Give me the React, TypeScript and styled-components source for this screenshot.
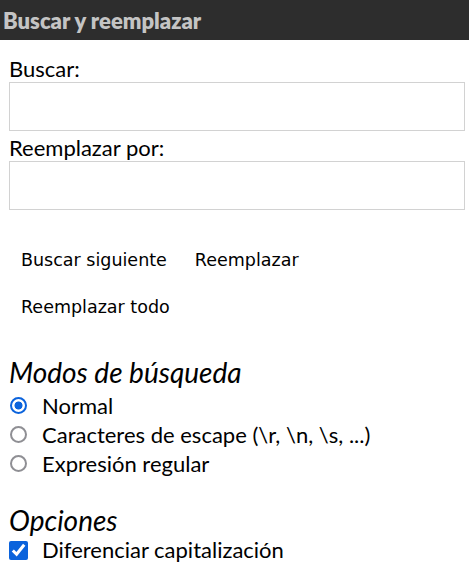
import React from "react";
import styled, { createGlobalStyle } from "styled-components";

const GlobalStyle = createGlobalStyle`
  html, body {
    margin: 0;
    padding: 0;
    background: #ffffff;
  }
  body {
    font-family: Lato, "Noto Sans", sans-serif;
    color: #000000;
  }
`;

type Mode = "normal" | "escape" | "regex";

const modes: { id: Mode; label: string }[] = [
  { id: "normal", label: "Normal" },
  { id: "escape", label: "Caracteres de escape (\\r, \\n, \\s, ...)" },
  { id: "regex", label: "Expresión regular" },
];

const App = () => {
  const [find, setFind] = React.useState("");
  const [replace, setReplace] = React.useState("");
  const [mode, setMode] = React.useState<Mode>("normal");
  const [matchCase, setMatchCase] = React.useState(true);

  return (
    <>
      <GlobalStyle />
      <Dialog>
        <TitleBar>Buscar y reemplazar</TitleBar>
        <Body>
          <Field>
            <FieldLabel htmlFor="find">Buscar:</FieldLabel>
            <TextBox id="find" value={find} onChange={(e) => setFind(e.target.value)} />
          </Field>
          <Field>
            <FieldLabel htmlFor="replace">Reemplazar por:</FieldLabel>
            <TextBox id="replace" value={replace} onChange={(e) => setReplace(e.target.value)} />
          </Field>

          <Actions>
            <ActionRow>
              <ActionButton>Buscar siguiente</ActionButton>
              <ActionButton>Reemplazar</ActionButton>
            </ActionRow>
            <ActionRow>
              <ActionButton>Reemplazar todo</ActionButton>
            </ActionRow>
          </Actions>

          <Section>
            <SectionTitle>Modos de búsqueda</SectionTitle>
            <ChoiceList>
              {modes.map((m) => (
                <Choice key={m.id} $height={29}>
                  <Radio
                    type="radio"
                    name="mode"
                    checked={mode === m.id}
                    onChange={() => setMode(m.id)}
                  />
                  {m.label}
                </Choice>
              ))}
            </ChoiceList>
          </Section>

          <Section>
            <SectionTitle>Opciones</SectionTitle>
            <Choice $height={26}>
              <Check
                type="checkbox"
                checked={matchCase}
                onChange={(e) => setMatchCase(e.target.checked)}
              />
              Diferenciar capitalización
            </Choice>
          </Section>
        </Body>
      </Dialog>
    </>
  );
};

export default App;

const Dialog = styled.div`
  width: 469px;
  display: flex;
  flex-direction: column;
`;

const TitleBar = styled.div`
  height: 40px;
  display: flex;
  align-items: center;
  padding-left: 3px;
  background: #2d2d2d;
  color: #c4c4c4;
  font-family: Lato, sans-serif;
  font-weight: 800;
  font-size: 22px;
`;

const Body = styled.div`
  display: flex;
  flex-direction: column;
  padding: 15px 4px 0 9px;
`;

const Field = styled.div`
  display: flex;
  flex-direction: column;
  & + & {
    margin-top: 3px;
  }
`;

const FieldLabel = styled.label`
  font-size: 22px;
  line-height: 27px;
`;

const TextBox = styled.input`
  box-sizing: border-box;
  width: 456px;
  height: 49px;
  margin: 0;
  border: 1px solid #d2d2d2;
  background: #ffffff;
  font-size: 18px;
  outline: none;
`;

const Actions = styled.div`
  display: flex;
  flex-direction: column;
  margin-top: 26px;
`;

const ActionRow = styled.div`
  display: flex;
  gap: 4px;
`;

const ActionButton = styled.button`
  border: none;
  background: none;
  padding: 0 12px;
  height: 47px;
  font-family: "DejaVu Sans", Verdana, sans-serif;
  font-size: 17.5px;
  color: #000000;
  cursor: pointer;
`;

const Section = styled.div`
  display: flex;
  flex-direction: column;
  margin-top: 25px;
`;

const SectionTitle = styled.div`
  font-style: italic;
  font-size: 28px;
  line-height: 34px;
`;

const ChoiceList = styled.div`
  display: flex;
  flex-direction: column;
  padding-top: 2px;
`;

const Choice = styled.label<{ $height: number }>`
  display: flex;
  align-items: center;
  gap: 14px;
  height: ${(p) => p.$height}px;
  font-size: 22px;
  line-height: ${(p) => p.$height}px;
`;

const Radio = styled.input`
  appearance: none;
  box-sizing: border-box;
  flex: none;
  width: 17px;
  height: 17px;
  margin: 0 1px 0 1px;
  border: 2px solid #8f8f94;
  border-radius: 50%;
  background: #ffffff;

  &:checked {
    border-color: #0b63dc;
    background: radial-gradient(circle, #0b63dc 0 3.6px, #ffffff 4.4px);
  }
`;

const Check = styled.input`
  flex: none;
  width: 19px;
  height: 19px;
  margin: 0;
  accent-color: #0b63dc;
`;
